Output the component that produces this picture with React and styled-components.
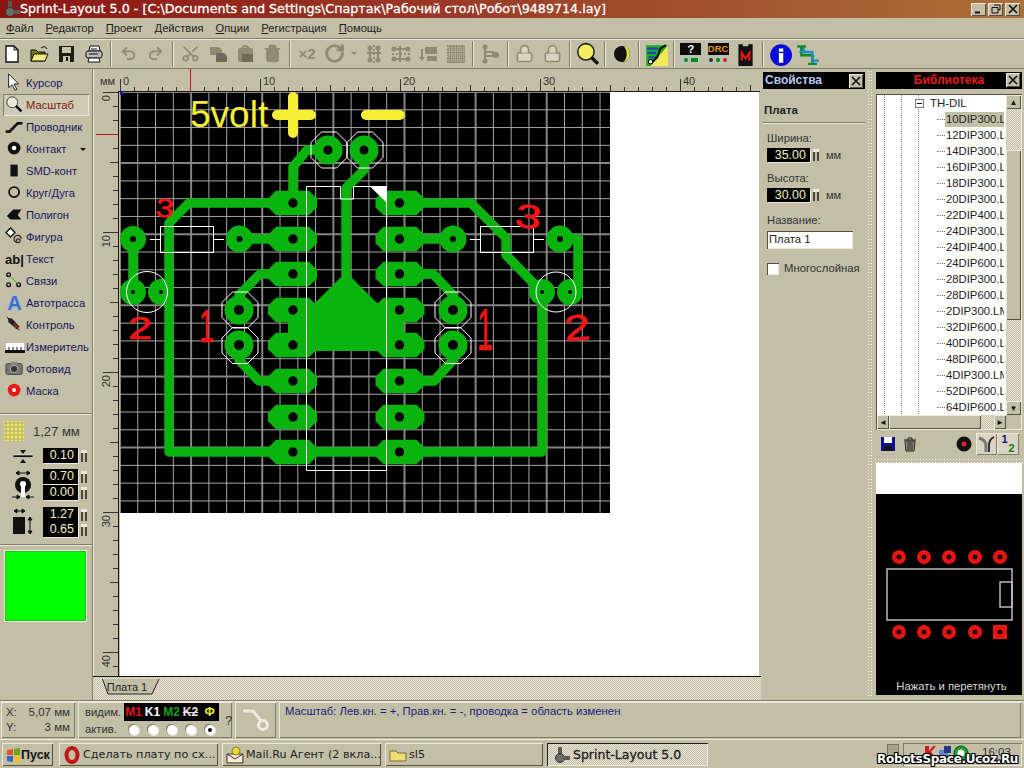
import React from 'react';
import styled, { createGlobalStyle, css } from 'styled-components';
import { Undo2, Redo2, Scissors, Trash2, RotateCw, Lock } from 'lucide-react';

const BG = '#c3bea6';
const NAVY = '#16165e';
const GREY = '#8f8a72';
const LIGHT = '#ece9da';
const DARK = '#7f7b66';

const Global = createGlobalStyle`
  html, body { margin: 0; padding: 0; background: ${BG}; overflow: hidden; }
  * { box-sizing: border-box; }
  #root { width: 1024px; height: 768px; }
`;

const raised = css`box-shadow: inset 1px 1px 0 ${LIGHT}, inset -1px -1px 0 #55523f;`;
const etched = css`box-shadow: inset 1px 1px 0 ${LIGHT}, inset -1px -1px 0 ${DARK};`;
const sunken = css`box-shadow: inset 1px 1px 0 #55523f, inset -1px -1px 0 ${LIGHT};`;
const checker = css`background: repeating-conic-gradient(#e6e3d6 0 25%, #c3bea6 0 50%) 0 0 / 2px 2px;`;

const Window = styled.div`
  position: relative; width: 1024px; height: 768px; background: ${BG}; overflow: hidden;
  display: flex; flex-direction: column;
  font: 11px/13px "Liberation Sans", Arial, sans-serif; color: #222;
`;
const TitleBar = styled.div`
  height: 18px; flex: none; display: flex; align-items: center; padding: 0 4px 0 3px;
  background: linear-gradient(90deg, #8c1513 0%, #9a3a26 45%, #ac7039 100%);
`;
const TitleText = styled.div`
  flex: 1; margin-left: -1px; color: #fff; white-space: nowrap;
  font: 12.7px/18px "DejaVu Sans", sans-serif; -webkit-text-stroke: .3px #fff;
`;
const CapBtn = styled.div`
  width: 15px; height: 13px; margin-left: 2px; background: ${BG}; ${raised};
  display: flex; align-items: center; justify-content: center;
`;
const MenuBar = styled.div`
  height: 20px; flex: none; display: flex; padding-left: 6px; align-items: center; gap: 12px;
  font-size: 11.2px; color: #222;
`;
const MenuItem = styled.span`display: inline-block;`;
const Mnemonic = styled.u`text-decoration: underline;`;
const Toolbar = styled.div`
  height: 31px; flex: none; display: flex; align-items: center; padding-left: 0; margin-left: -2px;
  width: 1026px;
  border-top: 1px solid ${DARK}; border-bottom: 1px solid ${DARK};
  box-shadow: inset 0 1px 0 ${LIGHT};
`;
const Tool = styled.div`
  width: ${p => p.$w || 27.33}px; height: 26px; flex: none;
  display: flex; align-items: center; justify-content: center;
  color: ${GREY}; font: bold 15px "Liberation Sans", sans-serif;
`;
const ToolSep = styled.div`
  width: 7.33px; height: 26px; flex: none; position: relative;
  background: linear-gradient(90deg, transparent 3px, ${DARK} 3px 4px, ${LIGHT} 4px 5px, transparent 5px);
`;
const Main = styled.div`
  flex: none; height: 631px; display: flex;
`;
const LeftPanel = styled.div`
  width: 93px; flex: none; padding-top: 3px; display: flex; flex-direction: column;
  border-right: 1px solid ${DARK};
`;
const ModeRow = styled.div`
  height: 22px; margin: 0 3px 0 3px; display: flex; align-items: center; flex: none;
  color: ${p => p.$on ? '#7a1a14' : NAVY};
  font-size: 11.2px;
  ${p => p.$on && css`background: #cfcab6; box-shadow: inset 1px 1px 0 ${DARK}, inset -1px -1px 0 ${LIGHT};`}
`;
const ModeIcon = styled.div`
  width: 23px; height: 22px; flex: none; display: flex; align-items: center; justify-content: center;
  font: bold 13px "Liberation Sans", sans-serif; color: #111;
`;
const AutoA = styled.span`color: #3a70d0; font-size: 20px; text-shadow: 0 0 3px #9ab8e8;`;
const Caret = styled.span`
  margin-left: auto; margin-right: 3px; width: 0; height: 0;
  border: 3px solid transparent; border-top: 3px solid ${p => p.$c || '#111'}; border-bottom: 0;
`;
const HSep = styled.div`
  height: 2px; flex: none; margin-top: ${p => p.$mt || 0}px; margin-inline: ${p => p.$mx || 0}px;
  background: linear-gradient(${DARK} 1px, ${LIGHT} 1px);
`;
const GridRow = styled.div`
  height: 24px; margin-top: 4px; display: flex; align-items: center; padding-left: 4px; flex: none;
  font-size: 13px; color: #333; gap: 9px;
`;
const ParamRow = styled.div`
  display: flex; align-items: center; flex: none; margin-top: ${p => p.$mt}px;
`;
const ParamIcon = styled.div`
  width: 43px; flex: none; display: flex; justify-content: center; padding-left: 2px;
`;
const FieldStack = styled.div`
  display: flex; flex-direction: column; gap: ${p => p.$gap}px;
`;
const FieldLine = styled.div`display: flex; align-items: center; gap: 3px;`;
const Field = styled.div`
  width: ${p => p.$w}px; height: ${p => p.$h || 15}px; background: #000; color: #f0efc0; text-align: right;
  padding-right: 4px; font-size: 12.5px; line-height: ${p => p.$h || 15}px;
  box-shadow: 1px 1px 0 ${LIGHT};
`;
const Spin = styled.span`
  width: 6px; height: 12px; flex: none;
  background: linear-gradient(90deg, #4a4838 0 2px, transparent 2px 4px, #4a4838 4px 6px);
  border-top: 3px solid ${LIGHT};
`;
const Swatch = styled.div`
  margin: 5px 0 0 5px; width: 81px; height: 70px; flex: none; background: #00ff00;
  box-shadow: 0 0 0 1px ${LIGHT}, inset 0 0 0 1px #20c020;
`;
const CanvasArea = styled.div`
  width: 667px; flex: none; display: flex; flex-direction: column; position: relative;
`;
const RulerTop = styled.svg`display: block; flex: none;`;
const CanvasBody = styled.div`display: flex; flex: none; height: 584px;`;
const RulerLeft = styled.svg`display: block; flex: none;`;
const Paper = styled.div`width: 639px; background: #fff; flex: none;`;
const Board = styled.svg`display: block;`;
const TabStrip = styled.div`
  flex: none; height: 24px; ${checker}; border-top: 1px solid #111; padding-left: 9px; margin-right: -1px;
`;
const Tab = styled.div`
  position: relative; width: 58px; height: 16px; margin-top: 2px; padding-right: 8px;
  display: flex; align-items: center; justify-content: center; color: #222; font-size: 11px;
`;
const TabShape = styled.svg`position: absolute; inset: 0; z-index: 0;`;
const TabLabel = styled.span`position: relative;`;
const PropsPanel = styled.div`
  width: 107px; flex: none; padding: 3px 2px 0 3px; display: flex; flex-direction: column;
`;
const Dotted = styled.div`
  width: 7px; flex: none; margin-top: 1px; height: 627px;
  background: radial-gradient(circle, #f3f1e8 0 1px, transparent 1px) 0 0 / 3px 3px;
`;
const PanelHead = styled.div`
  height: 17px; background: #000; flex: none; display: flex; align-items: center;
  padding: 0 2px 0 2px; color: ${p => p.$c}; font-weight: bold; font-size: 12px;
  justify-content: ${p => p.$center ? 'center' : 'flex-start'}; position: relative;
`;
const CloseBtn = styled.span`
  width: 14px; height: 14px; background: ${BG}; margin-left: auto; ${raised}; flex: none;
  display: flex; align-items: center; justify-content: center;
  ${p => p.$abs && css`position: absolute; right: 2px; top: 1px;`}
`;
const PropHeading = styled.div`
  margin-top: 15px; font-weight: bold; padding-left: 1px; color: #222; font-size: 11.5px;
`;
const PropLabel = styled.div`
  margin-top: ${p => p.$mt}px; padding-left: 4px; color: #333; font-size: 11.3px;
`;
const PropField = styled.div`
  display: flex; align-items: center; gap: 3px; margin: 3px 0 0 4px; color: #333; font-size: 11px;
`;
const Unit = styled.span`margin-left: 4px;`;
const NameInput = styled.div`
  margin: 4px 0 0 4px; width: 86px; height: 18px; background: #fff; padding-left: 2px; line-height: 17px;
  font-size: 11.3px; color: #222; ${sunken};
`;
const CheckRow = styled.div`
  margin: 13px 0 0 4px; display: flex; align-items: center; gap: 5px; color: #333; font-size: 11.3px;
`;
const CheckBox = styled.span`
  width: 12px; height: 12px; background: #fff; ${sunken}; flex: none;
`;
const LibPanel = styled.div`
  width: 150px; flex: none; padding: 3px 2px 0 2px; display: flex; flex-direction: column;
`;
const TreeFrame = styled.div`
  margin-top: 5px; height: 336px; width: 146px; flex: none; background: #fff; ${sunken}; padding: 1px 1px 1px 1px;
  display: grid; grid-template-columns: 1fr 15px; grid-template-rows: 1fr 14px;
`;
const TreeList = styled.div`
  overflow: hidden; display: flex; flex-direction: column; font-size: 11.3px; color: #222; padding-top: 0;
`;
const guides = `repeating-linear-gradient(#888 0 1px, transparent 1px 2px)`;
const TreeRow = styled.div`
  height: 16px; flex: none; display: flex; align-items: center; white-space: nowrap;
  background-image: ${guides}, ${guides}, ${guides};
  background-size: 1px 100%; background-repeat: no-repeat;
  background-position: 7px 0, 24px 0, 41px 0;
`;
const ExpandBox = styled.span`
  margin-left: 38px; width: 9px; height: 9px; background: #fff; border: 1px solid #777; flex: none; position: relative;
  &::after { content: ''; position: absolute; left: 1px; right: 1px; top: 3px; height: 1px; background: #111; }
`;
const Branch = styled.span`
  margin-left: 60px; width: 8px; flex: none; border-top: 1px dotted #777;
`;
const ItemName = styled.span`
  width: 59px; overflow: hidden; padding-left: 1px; height: 15px; line-height: 15px; flex: none;
  background: ${p => p.$sel ? BG : 'transparent'};
`;
const TreeHeadName = styled.span`margin-left: 6px; font-size: 11.4px;`;
const VScroll = styled.div`display: flex; flex-direction: column; ${checker};`;
const ScrollBtn = styled.div`
  width: ${p => p.$w || 15}px; height: 14px; flex: none; background: ${BG}; ${raised};
  display: flex; align-items: center; justify-content: center; font-size: 8px; color: #111;
`;
const ScrollSpace = styled.div`flex: ${p => p.$f};`;
const VThumb = styled.div`height: 170px; flex: none; background: ${BG}; ${raised};`;
const HScroll = styled.div`display: flex; ${checker};`;
const HThumb = styled.div`width: 92px; flex: none; background: ${BG}; ${raised};`;
const Corner = styled.div`background: ${BG};`;
const LibTools = styled.div`
  height: 28px; display: flex; align-items: center; flex: none; margin-top: 0;
`;
const LibTool = styled.div`
  width: ${p => p.$w}px; height: 22px; display: flex; align-items: center; justify-content: center; flex: none;
  ${p => p.$press && css`background: #d8d4c2; box-shadow: inset 1px 1px 0 ${LIGHT}, inset -1px -1px 0 ${DARK};`}
`;
const DotRow = styled.div`
  height: 5px; flex: none; margin-inline: -2px;
  background: radial-gradient(circle, #f3f1e8 0 1px, transparent 1px) 0 0 / 3px 3px;
`;
const PreviewWhite = styled.div`height: 31px; width: 146px; background: #fff; flex: none;`;
const Preview = styled.div`
  width: 146px; height: 201px; background: #000; flex: none; display: flex; flex-direction: column; color: #d8d8d8;
  font-size: 11.3px; text-align: center;
`;
const PreviewArt = styled.svg`display: block; flex: none;`;
const PreviewCaption = styled.div`margin-top: 6px; padding-left: 5px;`;
const StatusBar = styled.div`
  height: 39px; flex: none; display: flex; border-top: 1px solid ${DARK}; padding: 0 3px 1px 1px; gap: 3px;
  box-shadow: inset 0 1px 0 ${LIGHT};
`;
const StatusCell = styled.div`
  width: ${p => p.$w ? `${p.$w}px` : 'auto'}; flex: ${p => p.$w ? 'none' : 1}; ${etched}; margin-top: 1px;
`;
const Coords = styled.div`
  display: grid; grid-template-columns: 20px 1fr; padding: 4px 5px 0 5px; row-gap: 2px; color: #333; font-size: 11.5px;
`;
const CoordVal = styled.span`text-align: right;`;
const Layers = styled.div`
  display: grid; grid-template-columns: 39px 95px 1fr; padding: 1px 0 0 7px; align-items: center; font-size: 11.3px; color: #333;
`;
const LayerBox = styled.div`
  background: #000; height: 18px; display: grid; grid-template-columns: repeat(5, 19px); align-items: center;
  font: bold 12px "Liberation Sans", sans-serif; text-align: center;
`;
const LayerCode = styled.span`
  color: ${p => p.$c}; ${p => p.$strike && css`text-decoration: line-through;`}
`;
const Radios = styled.div`
  display: grid; grid-template-columns: repeat(5, 19px); justify-items: center; height: 17px; align-items: center;
`;
const Radio = styled.span`
  width: 10px; height: 10px; border-radius: 50%; background: #fff; box-shadow: -1px -1px 0 ${DARK}, 1px 1px 0 ${LIGHT};
  display: flex; align-items: center; justify-content: center;
  ${p => p.$on && css`&::after { content: ''; width: 4px; height: 4px; border-radius: 50%; background: #111; }`}
`;
const Help = styled.span`
  grid-row: 1 / 3; grid-column: 3; padding-left: 6px; font-size: 13px;
`;
const StatusIcon = styled.div`display: flex; align-items: center; justify-content: center; height: 100%;`;
const Message = styled.div`padding: 3px 0 0 6px; color: #1a1a78; font-size: 11.3px;`;
const Taskbar = styled.div`
  height: 29px; flex: none; display: flex; align-items: flex-start; padding: 3px 2px 0 2px; gap: 4px;
  border-top: 1px solid ${LIGHT}; position: relative;
  font: 11.2px "DejaVu Sans", sans-serif; color: #222;
`;
const StartBtn = styled.div`
  width: 51px; height: 23px; ${raised}; display: flex; align-items: center; padding-left: 3px; margin-right: 2px;
  font: bold 12.5px "Liberation Sans", sans-serif; color: #111; flex: none;
`;
const TaskBtn = styled.div`
  width: ${p => p.$w}px; height: 23px; flex: none; display: flex; align-items: center; padding-left: 4px; gap: 2px;
  white-space: nowrap; overflow: hidden;
  ${p => p.$on ? css`${checker}; box-shadow: inset 1px 1px 0 #222, inset -1px -1px 0 ${LIGHT}; font-size: 12.5px; -webkit-text-stroke: .3px #222; padding-left: 6px;` : raised}
`;
const Tray = styled.div`
  margin-left: auto; width: 119px; height: 23px; flex: none; box-shadow: inset 1px 1px 0 ${DARK}, inset -1px -1px 0 ${LIGHT};
  display: flex; align-items: flex-start; padding: 2px 0 0 20px; gap: 1px; font: 11.5px "Liberation Sans", sans-serif;
`;
const LangBox = styled.div`
  position: absolute; right: 125px; top: 4px; width: 12px; height: 16px; background: #a8a38c; border: 1px solid #77735f;
`;
const TrayTime = styled.span`margin: 1px 0 0 12px; color: #333;`;
const Watermark = styled.div`
  position: absolute; left: 877px; bottom: 2px; color: #fff; white-space: nowrap;
  font: bold 12px "DejaVu Sans", sans-serif; letter-spacing: -.3px;
  text-shadow: 1px 0 #000, -1px 0 #000, 0 1px #000, 0 -1px #000, 1px 1px #000, -1px -1px #000, 1px -1px #000, -1px 1px #000;
`;

/* ---------- small drawings ---------- */
const Ic = ({ s = 22, w, h, vb, children }) => (
  <svg width={w || s} height={h || s} viewBox={vb || '0 0 22 22'}>{children}</svg>
);
const G = { fill: GREY };
const CutIcon = styled(Scissors)`transform: rotate(-90deg);`;
const IconTools = {
  nu: <Ic><path d="M5 3h8l4 4v12H5z" fill="#fff" stroke="#111" strokeWidth="1.4" /><path d="M13 3v4h4" fill="none" stroke="#111" /></Ic>,
  open: <Ic><path d="M3 7h5l2 2h7v9H3z" fill="#7f7218" stroke="#111" /><path d="M3 18l3-7h14l-3 7z" fill="#f3e879" stroke="#111" /><path d="M13 5q4-3 6 1" fill="none" stroke="#111" /></Ic>,
  save: <Ic><rect x="4" y="3" width="15" height="16" fill="#1d1d14" /><rect x="7" y="4" width="9" height="6" fill="#c8c3ac" /><rect x="8" y="13" width="7" height="6" fill="#c8c3ac" /><rect x="11" y="14" width="2" height="4" fill="#111" /></Ic>,
  print: <Ic><path d="M7 3h9l1 5H6z" fill="#fff" stroke="#111" /><rect x="3" y="8" width="16" height="7" rx="2" fill="#bbb" stroke="#111" /><path d="M6 15h10l1 4H5z" fill="#fff" stroke="#111" /><path d="M6 11h9M8 6h6" stroke="#111" /></Ic>,
  undo: <Undo2 size={17} color={GREY} strokeWidth={2.6} />,
  redo: <Redo2 size={17} color={GREY} strokeWidth={2.6} />,
  cut: <CutIcon size={19} color={GREY} />,
  copy: <Ic><path d="M3 4h9l3 3v5H3z" {...G} /><path d="M9 10h8l3 3v6H9z" fill="#6f6b58" /></Ic>,
  paste: <Ic><rect x="4" y="5" width="15" height="14" rx="2" {...G} /><path d="M8 5q3-4 7 0" fill="none" stroke={GREY} strokeWidth="2" /><rect x="8" y="11" width="11" height="8" fill="#6f6b58" /></Ic>,
  del: <Trash2 size={19} color={GREY} fill={GREY} />,
  rot: <RotateCw size={21} color={GREY} strokeWidth={3.4} />,
  mir: <Ic><path d="M11 2v18" stroke={GREY} strokeWidth="2" strokeDasharray="2 2" /><path d="M7 4v13M15 4v13M4 10h14" stroke={GREY} strokeWidth="2" /><circle cx="7" cy="5" r="2.5" {...G} /><circle cx="7" cy="17" r="2.5" {...G} /><circle cx="15" cy="5" r="2.5" {...G} /><circle cx="15" cy="17" r="2.5" {...G} /></Ic>,
  flip: <Ic><path d="M2 11h18" stroke={GREY} strokeWidth="2" strokeDasharray="2 2" /><path d="M4 6h14M4 16h14M10 3v16" stroke={GREY} strokeWidth="2" /><circle cx="4" cy="6" r="2.5" {...G} /><circle cx="18" cy="6" r="2.5" {...G} /><circle cx="4" cy="16" r="2.5" {...G} /><circle cx="18" cy="16" r="2.5" {...G} /></Ic>,
  lay: <Ic><path d="M8 4h12v7H8z" {...G} /><path d="M2 14h2V6h2v8h2l-3 4zM10 13h10v5H10z" {...G} /></Ic>,
  mesh: <Ic><rect x="2" y="2" width="18" height="18" fill={GREY} /><path d="M4 2v18M7 2v18M10 2v18M13 2v18M16 2v18M19 2v18M2 5h18M2 8h18M2 11h18M2 14h18M2 17h18" stroke="#c3bea6" strokeDasharray="1 1" /></Ic>,
  node: <Ic><circle cx="6" cy="4" r="2.5" {...G} /><circle cx="6" cy="18" r="2.5" {...G} /><circle cx="17" cy="12" r="3" {...G} /><path d="M6 4v14M6 9h8v3M6 13h10" stroke={GREY} strokeWidth="2" fill="none" /></Ic>,
  lock: <Lock size={19} color={GREY} fill="#d8d4c2" />,
  zoom: <Ic s={24}><circle cx="10" cy="9" r="7.5" fill="#f4ee5c" stroke="#222" strokeWidth="1.4" /><path d="M15 14l6 6" stroke="#111" strokeWidth="3" /></Ic>,
  moon: <Ic><circle cx="11" cy="11" r="8" fill="#111" /><path d="M13 3.3a8 8 0 0 1 0 15.4a12 12 0 0 0 0-15.4z" fill="#e8dc50" /></Ic>,
  multi: <Ic s={24}><rect x="2" y="3" width="20" height="19" fill="#16b016" /><path d="M22 3v19H6z" fill="#f3e95a" /><path d="M3 6h10M3 10h8M4 14h7" stroke="#2040c0" strokeWidth="2" /><path d="M6 20l6-6 3-8 5-3" stroke="#111" strokeWidth="2" fill="none" /><circle cx="6" cy="18" r="2" fill="#fff" stroke="#111" /></Ic>,
  m: <Ic s={24}><path d="M5 2h4v2h5V2h4v21H5z" fill="#111" /><path d="M8 17V10l3.5 5L15 10v7" stroke="#e01818" strokeWidth="2" fill="none" /></Ic>,
  info: <Ic s={24}><circle cx="12" cy="12" r="10" fill="#0a0ad8" /><path d="M10 6h4v3h-4zM10 10h4v9h-4z" fill="#fff" /></Ic>,
  crop: <Ic s={24}><path d="M6 4v8h10v9" stroke="#0e8a2a" strokeWidth="2.5" fill="none" /><path d="M4 9h12v12M8 4v5M16 17h6" stroke="#1890d0" strokeWidth="2" fill="none" /><path d="M2 4h8M12 20h8" stroke="#0e8a2a" strokeWidth="2" /></Ic>,
};
const QBox = styled.div`
  width: 21px; height: 21px; background: #0b0b0b; display: flex; flex-direction: column; align-items: center; position: relative;
  color: #fff; font: bold 11px/12px "Liberation Sans", sans-serif;
`;
const QPads = styled.div`
  position: absolute; left: 0; right: 0; bottom: 0; height: 9px; background: #b8c4b0;
  display: flex; align-items: center; justify-content: center; gap: 3px;
`;
const Dot = styled.i`
  width: ${p => p.$w || 4}px; height: 4px; border-radius: ${p => p.$w ? 0 : '50%'}; background: ${p => p.$c}; display: block;
`;
const DrcText = styled.span`color: #e09020; font-size: 9.5px; line-height: 11px;`;

const Cursor = () => <Ic s={20}><path d="M4 1v15l4-3 3 6 2-1-3-6h5z" fill="#fff" stroke="#111" /></Ic>;
const Lens = () => <Ic s={20}><circle cx="8" cy="8" r="6" fill="#e8e6da" stroke="#333" /><path d="M12 12l6 6" stroke="#111" strokeWidth="3" /></Ic>;
const Wire = () => <Ic s={20}><path d="M2 16h3l9-9h4" stroke="#111" strokeWidth="3" fill="none" strokeLinecap="round" /></Ic>;
const PadI = () => <Ic s={20}><circle cx="10" cy="10" r="7" fill="#111" /><circle cx="10" cy="10" r="2.5" fill="#fff" /></Ic>;
const Smd = () => <Ic s={20}><rect x="6" y="4" width="8" height="13" fill="#111" /></Ic>;
const Ring = () => <Ic s={20}><circle cx="10" cy="10" r="5.5" fill="none" stroke="#111" strokeWidth="2" /></Ic>;
const Poly = () => <Ic s={20}><path d="M2 12l7-7h9l-4 6 4 5H6z" fill="#111" /></Ic>;
const Fig = () => <Ic s={20}><path d="M6 1l5 5-5 5-5-5z" fill="#fff" stroke="#111" strokeWidth="1.5" /><path d="M13 16a2 2 0 1 1 2 1a4 4 0 1 1 3-4" fill="none" stroke="#333" strokeWidth="1.5" /></Ic>;
const Net = () => <Ic s={20}><circle cx="4" cy="4" r="2" fill="none" stroke="#111" strokeWidth="1.5" /><circle cx="4" cy="15" r="2" fill="none" stroke="#111" strokeWidth="1.5" /><circle cx="15" cy="15" r="2" fill="none" stroke="#111" strokeWidth="1.5" /><path d="M5 5l9 9" stroke="#20b020" /></Ic>;
const Probe = () => <Ic s={20}><path d="M2 2l14 15" stroke="#111" strokeWidth="1" /><path d="M3 3l5 1 8 9-3 3-9-8z" fill="#222" /><path d="M10 9l4 5" stroke="#d02020" strokeWidth="1.5" /><path d="M8 11l4 3" stroke="#20a020" /></Ic>;
const Meter = () => <Ic w={20} h={12} vb="0 0 20 12"><rect x="0" y="9" width="20" height="3" fill="#111" /><rect x="1" y="2" width="18" height="7" fill="#fff" /><path d="M4 6v3M8 6v3M12 6v3M16 6v3" stroke="#111" /></Ic>;
const Camera = () => <Ic s={20}><rect x="1" y="5" width="18" height="12" rx="2" fill="#77776f" stroke="#444" /><rect x="6" y="3" width="8" height="3" fill="#888" /><circle cx="10" cy="11" r="4" fill="#333" stroke="#bbb" /></Ic>;
const Mask = () => <Ic s={20}><circle cx="10" cy="10" r="7" fill="#e81818" /><circle cx="10" cy="10" r="2.2" fill="#fff" /></Ic>;
const GridIcon = () => <Ic s={20} vb="0 0 20 20"><rect width="20" height="20" fill="#efe870" /><path d="M2 0v20M6 0v20M10 0v20M14 0v20M18 0v20M0 2h20M0 6h20M0 10h20M0 14h20M0 18h20" stroke="#b0a858" /></Ic>;
const Gap1 = () => <Ic w={20} h={14} vb="0 0 20 14"><rect x="0" y="6" width="20" height="2.5" rx="1" fill="#111" stroke="#fff" strokeWidth=".5" /><path d="M10 5L7 1h6zM10 10l-3 4h6z" fill="#111" /></Ic>;
const PadDim = () => <Ic w={24} h={30} vb="0 0 24 30"><path d="M5 3h14M5 3l3-2v4zM19 3l-3-2v4z" stroke="#111" fill="#111" /><circle cx="12" cy="15" r="8" fill="#111" /><circle cx="12" cy="14" r="3" fill="#fff" /><rect x="10" y="14" width="4" height="13" fill="#fff" /><path d="M1 27h8M15 27h8M9 27l-3-2v4zM15 27l3-2v4z" stroke="#111" fill="#111" /></Ic>;
const SmdDim = () => <Ic w={24} h={28} vb="0 0 24 28"><path d="M3 3h11M3 3l3-2v4zM14 3l-3-2v4z" stroke="#111" fill="#111" /><rect x="2" y="9" width="12" height="17" fill="#111" /><path d="M19 9v17M19 9l-2 3h4zM19 26l-2-3h4z" stroke="#111" fill="#111" /></Ic>;
const Flag = () => <Ic s={16} vb="0 0 16 16"><path d="M2 3l6-1v6H2z" fill="#e0542a" /><path d="M9 2l6-1v7H9z" fill="#6aa52a" /><path d="M2 9h6v6l-6-1z" fill="#3a66c8" /><path d="M9 9h6v7l-6-1z" fill="#f0c020" /></Ic>;
const Opera = () => <Ic s={18} vb="0 0 18 18"><ellipse cx="9" cy="9" rx="5.5" ry="7" fill="none" stroke="#c01818" strokeWidth="4" /></Ic>;
const Mail = () => <Ic s={18} vb="0 0 18 18"><path d="M1 8h16v9H1z" fill="#f8e8d0" stroke="#333" /><path d="M1 8l8 5 8-5" fill="none" stroke="#333" /><circle cx="10" cy="5" r="4" fill="#e8d838" stroke="#8c8010" /></Ic>;
const Folder = () => <Ic s={18} vb="0 0 18 18"><path d="M1 5h6l2 2h8v8H1z" fill="#f0de70" stroke="#77703a" /></Ic>;
const Sprint = () => <Ic s={18} vb="0 0 18 18"><rect x="5" y="1" width="4" height="7" fill="#5a5a56" /><circle cx="7" cy="12" r="4.5" fill="#6c6c68" stroke="#333" /><rect x="11" y="10" width="6" height="4" fill="#5a5a56" /></Ic>;
const XGlyph = () => <Ic s={10} vb="0 0 10 10"><path d="M1 1l8 8M9 1l-8 8" stroke="#111" strokeWidth="1.7" /></Ic>;
const Disk = () => <Ic s={16} vb="0 0 16 16"><rect x="1" y="1" width="14" height="14" fill="#10108a" /><rect x="4" y="1" width="8" height="6" fill="#fff" /><rect x="4" y="10" width="8" height="5" fill="#111" /></Ic>;
const Bin = () => <Ic s={16} vb="0 0 16 16"><path d="M2 4h12M6 4V2h4v2" stroke="#222" fill="none" /><path d="M3 5h10l-1 10H4z" fill="#9a9682" stroke="#222" /><path d="M6 6v8M8 6v8M10 6v8" stroke="#222" /></Ic>;
const RedPad = () => <Ic s={16} vb="0 0 16 16"><circle cx="8" cy="8" r="7.5" fill="#111" /><circle cx="8" cy="8" r="2.5" fill="#e02020" /></Ic>;
const Fork = () => <Ic s={18} vb="0 0 18 18"><path d="M1 3q7 2 7 8v6" stroke="#777" strokeWidth="3" fill="none" /><path d="M16 2q-5 2-5 9v6" stroke="#222" strokeWidth="1.8" fill="none" /></Ic>;
const Num12 = styled.span`
  font: bold 11px/9px "Liberation Sans", sans-serif; color: #10108a; display: flex; flex-direction: column;
  & b { color: #147a14; padding-left: 7px; font-weight: bold; }
`;
const TraceGlyph = () => <Ic w={30} h={26} vb="0 0 30 26"><path d="M2 4h10l9 11" stroke="#eceae0" strokeWidth="3" fill="none" /><circle cx="22" cy="18" r="4.5" fill="none" stroke="#eceae0" strokeWidth="3" /></Ic>;
const Kav = () => <Ic s={14} vb="0 0 14 14"><path d="M2 1h4v5l4-5h3l-5 6 5 6H9L6 8v5H2z" fill="#d81818" /></Ic>;
const Net2 = () => <Ic s={14} vb="0 0 14 14"><rect x="1" y="5" width="9" height="8" fill="#5b86c8" /><rect x="6" y="1" width="7" height="7" fill="#223a8a" /></Ic>;
const OkC = () => <Ic s={16} vb="0 0 16 16"><circle cx="8" cy="8" r="7" fill="#1aa02a" stroke="#0a4a12" /><circle cx="8" cy="8" r="3.5" fill="#fff" /></Ic>;

/* ---------- rulers ---------- */
const range = (n) => Array.from({ length: n }, (_, i) => i);
const rulerFont = { fontFamily: '"Liberation Sans", sans-serif', fontSize: 11, fill: '#333' };

const TopRuler = () => (
  <RulerTop width="667" height="23" viewBox="93 69 667 23">
    {range(46).map(i => {
      const x = 120 + 14 * i;
      const y1 = i % 10 === 0 ? 79 : i % 5 === 0 ? 85 : 87;
      return <path key={i} d={`M${x + .5} ${y1}V91`} stroke="#333" />;
    })}
    {[0, 10, 20, 30, 40].map(v => <text key={v} x={123 + v * 14} y="85" {...rulerFont}>{v}</text>)}
    <text x="100" y="85" {...rulerFont}>мм</text>
    <path d="M190.5 69V91" stroke="#c01818" />
    <path d="M118 91.5H760" stroke="#1a1a1a" />
    <path d="M93.5 69V92" stroke={LIGHT} />
  </RulerTop>
);
const LeftRuler = () => (
  <RulerLeft width="27" height="584" viewBox="93 92 27 584">
    {range(42).map(i => {
      const y = 92 + 14 * i;
      const x1 = i % 10 === 0 ? 103 : i % 5 === 0 ? 110 : 113;
      return <path key={i} d={`M${x1} ${y + .5}H118`} stroke="#333" />;
    })}
    {[0, 10, 20, 30, 40].map(v => (
      <text key={v} transform={`translate(110 ${92 + v * 14 + 3}) rotate(-90)`} textAnchor="end" {...rulerFont}>{v}</text>
    ))}
    <path d="M96 134.5H118" stroke="#c01818" />
    <path d="M118.5 92V676" stroke="#1a1a1a" />
    <path d="M93.5 92V676" stroke={LIGHT} />
  </RulerLeft>
);

/* ---------- board ---------- */
const PCB = '#0bb30f';
const oct = (cx, cy, r) => {
  const c = r * .42;
  return [[cx - c, cy - r], [cx + c, cy - r], [cx + r, cy - c], [cx + r, cy + c], [cx + c, cy + r], [cx - c, cy + r], [cx - r, cy + c], [cx - r, cy - c]].map(p => p.join(',')).join(' ');
};
const dipRows = [203, 239, 274, 310, 345, 381, 417, 452];
const dipPad = (cx, cy) => {
  const a = 24.5, b = 12.3, c = 8;
  return [[cx - a + c, cy - b], [cx + a - c, cy - b], [cx + a, cy - b + c], [cx + a, cy + b - c], [cx + a - c, cy + b], [cx - a + c, cy + b], [cx - a, cy + b - c], [cx - a, cy - b + c]].map(p => p.join(',')).join(' ');
};
const traces = [
  'M328 150H307L293 167V203',
  'M364 150V170L346 188V275',
  'M293 203H189L169 223V452H542V292',
  'M293 239H239',
  'M293 274H260L239 295V310',
  'M239 345V360L259 381H293',
  'M133 239V292',
  'M400 203H471L506 238V255L542 292',
  'M400 239H453',
  'M400 274H433L453 295V310',
  'M453 345V360L434 381H400',
  'M560 239H578V285L570 292',
];
const roundPads = [
  [328, 150, 14.5, 4.5], [364, 150, 14.5, 4.5],
  [133, 239, 13, 3], [239.5, 239, 13.5, 3],
  [453, 239, 13.5, 3], [560, 239, 13.5, 3],
  [133, 292, 13, 2], [161, 292, 13, 2], [542, 292, 13, 2], [570, 292, 13, 2],
  [239, 310, 14.5, 5], [239, 345, 14.5, 5], [453, 310, 14.5, 5], [453, 345, 14.5, 5],
];
const Scrawl = ({ x, y, size, width, rot = 0, children }) => (
  <text
    x={x} y={y} fontSize={size} textLength={width} lengthAdjust="spacingAndGlyphs"
    fontFamily='"Liberation Sans", sans-serif' fill="#ee1515" stroke="#ee1515" strokeWidth=".7"
    transform={`rotate(${rot} ${x} ${y})`}
  >{children}</text>
);

const PcbBoard = () => (
  <Board width="490" height="421" viewBox="120 92 490 421">
    <rect x="120" y="92" width="490" height="421" fill="#000" />
    {range(28).map(i => {
      const x = 120 + 17.78 * i; const thick = i % 4 === 0;
      return <path key={`v${i}`} d={`M${x} 92V513`} stroke={thick ? '#848484' : '#a6a6a6'} strokeWidth={thick ? 2 : 1} />;
    })}
    {range(24).map(i => {
      const y = 92 + 17.78 * i; const thick = i % 4 === 0;
      return <path key={`h${i}`} d={`M120 ${y}H610`} stroke={thick ? '#848484' : '#a6a6a6'} strokeWidth={thick ? 2 : 1} />;
    })}
    <rect x="120" y="92" width="3" height="3" fill="#1818c8" />
    <polygon points="346,272 377,303 404,303 404,351 377,351 317,351 288,351 288,303 315,303" fill={PCB} />
    {traces.map(d => <path key={d} d={d} stroke={PCB} strokeWidth="9.5" fill="none" strokeLinejoin="round" strokeLinecap="round" />)}
    {dipRows.map(y => (
      <g key={y}>
        <polygon points={dipPad(292.5, y)} fill={PCB} />
        <polygon points={dipPad(400, y)} fill={PCB} />
      </g>
    ))}
    {roundPads.map(([x, y, r]) => <circle key={`${x}-${y}`} cx={x} cy={y} r={r} fill={PCB} />)}
    {roundPads.map(([x, y, , h]) => <circle key={`${x}_${y}`} cx={x} cy={y} r={h} fill="#000" />)}
    {dipRows.map(y => (
      <g key={y}>
        <circle cx="293" cy={y} r="4.7" fill="#000" />
        <circle cx="399.5" cy={y} r="4.7" fill="#000" />
      </g>
    ))}
    <g fill="none" stroke="#fff" strokeWidth="1">
      <path d="M306.5 186.5H340.5V199H353.5V186.5H386.5V470.5H306.5Z" />
      <rect x="160.5" y="226.5" width="53" height="26" />
      <rect x="480.5" y="226.5" width="53" height="26" />
      <path d="M150 239.5H160M214 239.5H224M470 239.5H480M534 239.5H544" />
      <polygon points={oct(329, 150, 18)} />
      <polygon points={oct(365, 150, 18)} />
      <polygon points={oct(240, 310, 18)} />
      <polygon points={oct(240, 345.5, 18)} />
      <polygon points={oct(453, 310, 18)} />
      <polygon points={oct(453, 345.5, 18)} />
      <circle cx="147" cy="292" r="20.5" />
      <circle cx="556" cy="292" r="20" />
    </g>
    <polygon points="370,186.5 387,186.5 387,203" fill="#fff" />
    <text x="190" y="127" fontFamily='"Liberation Sans", sans-serif' fontSize="37" fill="#f5ee35">5volt</text>
    <path d="M277 115H311M293 97V133M366 115H400" stroke="#f5ee35" strokeWidth="10" strokeLinecap="round" />
    <Scrawl x={155} y={216} size={26} width={18} rot={6}>3</Scrawl>
    <Scrawl x={514} y={226} size={33} width={26} rot={8}>3</Scrawl>
    <Scrawl x={128} y={339} size={32} width={24}>2</Scrawl>
    <Scrawl x={565} y={341} size={36} width={26} rot={-4}>2</Scrawl>
    <Scrawl x={199} y={342} size={46} width={15}>1</Scrawl>
    <Scrawl x={477} y={350} size={60} width={16}>1</Scrawl>
  </Board>
);

/* ---------- data ---------- */
const modes = [
  ['Курсор', <Cursor />], ['Масштаб', <Lens />, true], ['Проводник', <Wire />],
  ['Контакт', <PadI />, false, true], ['SMD-конт', <Smd />], ['Круг/Дуга', <Ring />],
  ['Полигон', <Poly />], ['Фигура', <Fig />], ['Текст', 'ab|'], ['Связи', <Net />],
  ['Автотрасса', <AutoA>A</AutoA>],
  ['Контроль', <Probe />], ['Измеритель', <Meter />], ['Фотовид', <Camera />], ['Маска', <Mask />],
];
const parts = ['10DIP300.LM', '12DIP300.LM', '14DIP300.LM', '16DIP300.LM', '18DIP300.LM', '20DIP300.LM', '22DIP400.LM', '24DIP300.LM', '24DIP400.LM', '24DIP600.LM', '28DIP300.LM', '28DIP600.LM', '2DIP300.LM', '32DIP600.LM', '40DIP600.LM', '48DIP600.LM', '4DIP300.LM', '52DIP600.LM', '64DIP600.LM'];
const menus = ['Файл', 'Редактор', 'Проект', 'Действия', 'Опции', 'Регистрация', 'Помощь'];
const layers = [['M1', '#e01818'], ['K1', '#ffffff'], ['M2', '#10a020'], ['K2', '#e0e0e0', true], ['Ф', '#f0ea30']];

const Num = ({ v, w = 35 }) => <FieldLine><Field $w={w}>{v}</Field><Spin /></FieldLine>;

export default function App() {
  return (
    <Window>
      <Global />
      <TitleBar>
        <Sprint />
        <TitleText>Sprint-Layout 5.0 - [C:\Documents and Settings\Спартак\Рабочий стол\Робот\9489714.lay]</TitleText>
        <CapBtn><Ic s={9} vb="0 0 9 9"><path d="M1 7.5h5" stroke="#111" strokeWidth="2" /></Ic></CapBtn>
        <CapBtn><Ic s={10} vb="0 0 10 10"><path d="M3 1h6v5H7M1 3.5h6V9H1z" fill="none" stroke="#111" /></Ic></CapBtn>
        <CapBtn><XGlyph /></CapBtn>
      </TitleBar>
      <MenuBar>
        {menus.map(m => <MenuItem key={m}><Mnemonic>{m[0]}</Mnemonic>{m.slice(1)}</MenuItem>)}
      </MenuBar>
      <Toolbar>
        {['nu', 'open', 'save', 'print'].map(k => <Tool key={k}>{IconTools[k]}</Tool>)}
        <ToolSep />
        <Tool>{IconTools.undo}</Tool><Tool>{IconTools.redo}</Tool>
        <ToolSep />
        {['cut', 'copy', 'paste', 'del'].map(k => <Tool key={k}>{IconTools[k]}</Tool>)}
        <ToolSep />
        <Tool>×2</Tool>
        <Tool>{IconTools.rot}</Tool>
        <Tool $w={12}><Caret $c={GREY} /></Tool>
        {['mir', 'flip', 'lay', 'mesh'].map(k => <Tool key={k}>{IconTools[k]}</Tool>)}
        <ToolSep />
        <Tool>{IconTools.node}</Tool>
        <ToolSep />
        <Tool>{IconTools.lock}</Tool><Tool>{IconTools.lock}</Tool>
        <ToolSep />
        <Tool>{IconTools.zoom}</Tool>
        <ToolSep />
        <Tool>{IconTools.moon}</Tool>
        <ToolSep />
        <Tool>{IconTools.multi}</Tool>
        <ToolSep />
        <Tool><QBox>?<QPads><Dot $c="#0a8a1a" /><Dot $c="#0a8a1a" $w={7} /></QPads></QBox></Tool>
        <Tool><QBox><DrcText>DRC</DrcText><QPads><Dot $c="#333" /><Dot $c="#0a8a1a" /><Dot $c="#e02020" /></QPads></QBox></Tool>
        <Tool>{IconTools.m}</Tool>
        <ToolSep />
        <Tool>{IconTools.info}</Tool>
        <Tool>{IconTools.crop}</Tool>
      </Toolbar>
      <Main>
        <LeftPanel>
          {modes.map(([label, icon, on, caret]) => (
            <ModeRow key={label} $on={on}>
              <ModeIcon>{icon}</ModeIcon>{label}{caret && <Caret />}
            </ModeRow>
          ))}
          <HSep $mt={11} />
          <GridRow><GridIcon />1,27 мм</GridRow>
          <ParamRow $mt={5}><ParamIcon><Gap1 /></ParamIcon><Num v="0.10" /></ParamRow>
          <ParamRow $mt={6}>
            <ParamIcon><PadDim /></ParamIcon>
            <FieldStack $gap={1}><Num v="0.70" /><Num v="0.00" /></FieldStack>
          </ParamRow>
          <ParamRow $mt={7}>
            <ParamIcon><SmdDim /></ParamIcon>
            <FieldStack $gap={0}><Num v="1.27" /><Num v="0.65" /></FieldStack>
          </ParamRow>
          <HSep $mt={7} />
          <Swatch />
        </LeftPanel>
        <CanvasArea>
          <TopRuler />
          <CanvasBody>
            <LeftRuler />
            <Paper><PcbBoard /></Paper>
          </CanvasBody>
          <TabStrip>
            <Tab>
              <TabShape width="58" height="16" viewBox="0 0 58 16">
                <path d="M.5 0L6 15H50L57 0" fill={BG} stroke="#222" />
              </TabShape>
              <TabLabel>Плата 1</TabLabel>
            </Tab>
          </TabStrip>
        </CanvasArea>
        <PropsPanel>
          <PanelHead $c="#b8c8f4">Свойства<CloseBtn><XGlyph /></CloseBtn></PanelHead>
          <PropHeading>Плата</PropHeading>
          <HSep $mt={5} />
          <PropLabel $mt={8}>Ширина:</PropLabel>
          <PropField><Field $w={43} $h={14}>35.00</Field><Spin /><Unit>мм</Unit></PropField>
          <PropLabel $mt={10}>Высота:</PropLabel>
          <PropField><Field $w={43} $h={14}>30.00</Field><Spin /><Unit>мм</Unit></PropField>
          <PropLabel $mt={12}>Название:</PropLabel>
          <NameInput>Плата 1</NameInput>
          <CheckRow><CheckBox />Многослойная</CheckRow>
        </PropsPanel>
        <Dotted />
        <LibPanel>
          <PanelHead $c="#e81818" $center>Библиотека<CloseBtn $abs><XGlyph /></CloseBtn></PanelHead>
          <TreeFrame>
            <TreeList>
              <TreeRow><ExpandBox /><TreeHeadName>TH-DIL</TreeHeadName></TreeRow>
              {parts.map((p, i) => (
                <TreeRow key={p}><Branch /><ItemName $sel={i === 0}>{p}</ItemName></TreeRow>
              ))}
            </TreeList>
            <VScroll>
              <ScrollBtn>▲</ScrollBtn>
              <ScrollSpace $f={42} />
              <VThumb />
              <ScrollSpace $f={82} />
              <ScrollBtn>▼</ScrollBtn>
            </VScroll>
            <HScroll>
              <ScrollBtn $w={12}>◄</ScrollBtn>
              <HThumb />
              <ScrollSpace $f={1} />
              <ScrollBtn $w={12}>►</ScrollBtn>
            </HScroll>
            <Corner />
          </TreeFrame>
          <LibTools>
            <LibTool $w={23}><Disk /></LibTool>
            <LibTool $w={22}><Bin /></LibTool>
            <LibTool $w={30} />
            <LibTool $w={25}><RedPad /></LibTool>
            <LibTool $w={21} $press><Fork /></LibTool>
            <LibTool $w={22} $press><Num12>1<b>2</b></Num12></LibTool>
          </LibTools>
          <DotRow />
          <PreviewWhite />
          <Preview>
            <PreviewArt width="146" height="180" viewBox="876 494 146 180">
              {[899, 924, 949, 975, 1000].map(x => (
                <g key={x}>
                  <circle cx={x} cy="557" r="7" fill="#e81414" /><circle cx={x} cy="557" r="2.5" fill="#111" />
                  {x === 1000 ? <rect x={993} y={625} width="14" height="14" fill="#e81414" /> : <circle cx={x} cy="632" r="7" fill="#e81414" />}
                  <circle cx={x} cy="632" r="2.5" fill="#111" />
                </g>
              ))}
              <rect x="887" y="569" width="125" height="51" fill="none" stroke="#c8c8c8" strokeWidth="1.4" />
              <rect x="1000" y="582" width="12" height="25" fill="none" stroke="#c8c8c8" strokeWidth="1.4" />
            </PreviewArt>
            <PreviewCaption>Нажать и перетянуть</PreviewCaption>
          </Preview>
        </LibPanel>
      </Main>
      <StatusBar>
        <StatusCell $w={74}>
          <Coords>
            <span>X:</span><CoordVal>5,07 мм</CoordVal>
            <span>Y:</span><CoordVal>3 мм</CoordVal>
          </Coords>
        </StatusCell>
        <StatusCell $w={154}>
          <Layers>
            <span>видим.</span>
            <LayerBox>{layers.map(([t, c, s]) => <LayerCode key={t} $c={c} $strike={s}>{t}</LayerCode>)}</LayerBox>
            <Help>?</Help>
            <span>актив.</span>
            <Radios>{layers.map(([t], i) => <Radio key={t} $on={i === 4} />)}</Radios>
          </Layers>
        </StatusCell>
        <StatusCell $w={41}><StatusIcon><TraceGlyph /></StatusIcon></StatusCell>
        <StatusCell><Message>Масштаб: Лев.кн. = +, Прав.кн. = -, проводка = область изменен</Message></StatusCell>
      </StatusBar>
      <Taskbar>
        <StartBtn><Flag />Пуск</StartBtn>
        <TaskBtn $w={159}><Opera />Сделать плату по сх...</TaskBtn>
        <TaskBtn $w={159}><Mail />Mail.Ru Агент (2 вкла...</TaskBtn>
        <TaskBtn $w={158}><Folder />sl5</TaskBtn>
        <TaskBtn $w={161} $on><Sprint />Sprint-Layout 5.0</TaskBtn>
        <LangBox />
        <Tray><Kav /><Net2 /><OkC /><TrayTime>16:03</TrayTime></Tray>
        <Watermark>RobotsSpace.Ucoz.Ru</Watermark>
      </Taskbar>
    </Window>
  );
}
